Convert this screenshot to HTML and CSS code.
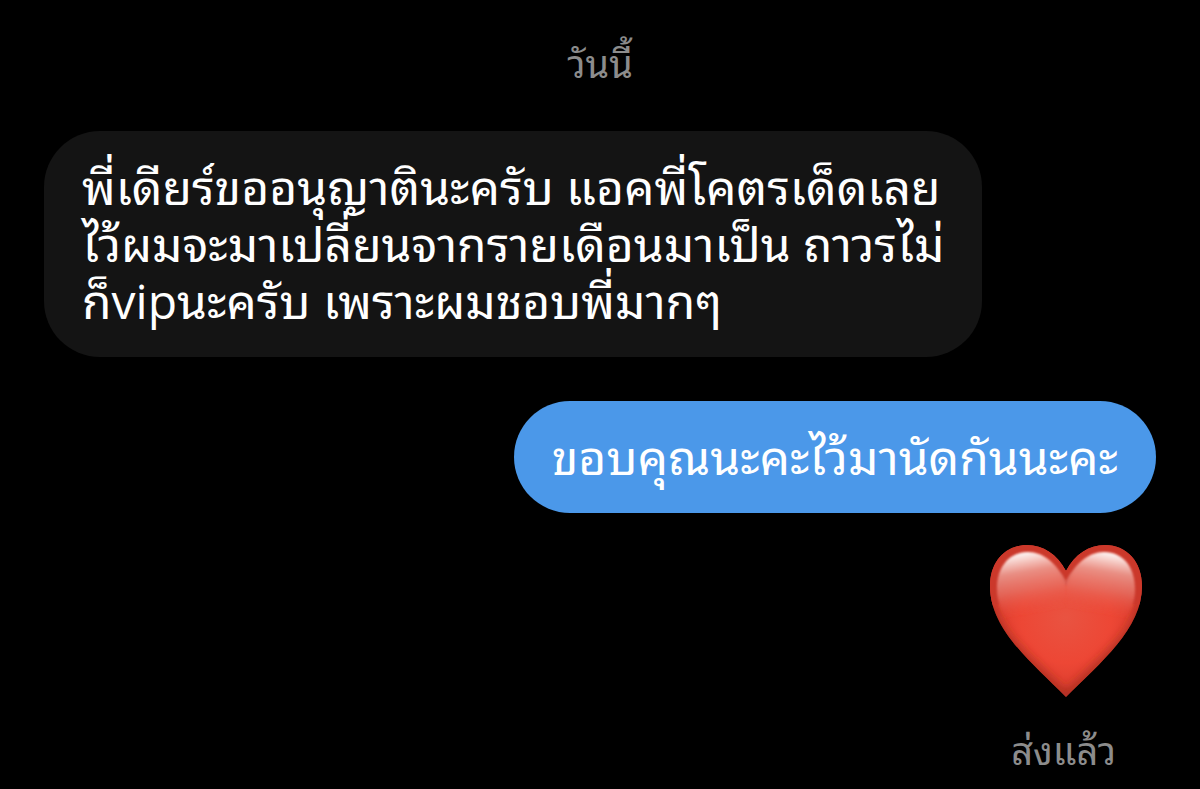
FILE: index.html
```html
<!DOCTYPE html>
<html lang="th">
<head>
<meta charset="utf-8">
<meta name="viewport" content="width=device-width, initial-scale=1">
<title>แชท</title>
<link rel="stylesheet" href="styles.css">
</head>
<body>
<main class="chat">
  <time class="day">วันนี้</time>
  <p class="bubble bubble-in">พี่เดียร์ขออนุญาตินะครับ แอคพี่โคตรเด็ดเลย<br>ไว้ผมจะมาเปลี่ยนจากรายเดือนมาเป็น ถาวรไม่<br>ก็vipนะครับ เพราะผมชอบพี่มากๆ</p>
  <p class="bubble bubble-out">ขอบคุณนะคะไว้มานัดกันนะคะ</p>
  <svg class="heart" viewBox="0 0 154 154" role="img" aria-label="หัวใจ">
    <defs>
      <radialGradient id="body" gradientUnits="userSpaceOnUse" cx="77" cy="74" r="90">
        <stop offset="0" stop-color="#e95341"/>
        <stop offset="0.5" stop-color="#ed4735"/>
        <stop offset="0.75" stop-color="#e04030"/>
        <stop offset="1" stop-color="#c73529"/>
      </radialGradient>
      <linearGradient id="shine" gradientUnits="userSpaceOnUse" x1="35" y1="7" x2="46" y2="70">
        <stop offset="0" stop-color="#fff" stop-opacity="1"/>
        <stop offset="0.12" stop-color="#fbe6e2" stop-opacity="0.9"/>
        <stop offset="0.32" stop-color="#eb9d93" stop-opacity="0.85"/>
        <stop offset="0.6" stop-color="#e67b6f" stop-opacity="0.65"/>
        <stop offset="1" stop-color="#ea5140" stop-opacity="0"/>
      </linearGradient>
      <filter id="soft" x="-10%" y="-10%" width="120%" height="120%">
        <feGaussianBlur stdDeviation="1"/>
      </filter>
      <filter id="shade" x="-20%" y="-20%" width="140%" height="140%">
        <feGaussianBlur stdDeviation="5"/>
      </filter>
      <clipPath id="outline">
        <path d="M77 27C68 10 54 1 38 1C16 1 1 18 1 42C1 85 42 118 77 153C112 118 153 85 153 42C153 18 138 1 116 1C100 1 86 10 77 27Z"/>
      </clipPath>
      <path id="lobe" d="M77 37C67 19 54 8 39 8C20 8 8 23 8 45C8 58 12 66 16 76L77 76Z"/>
    </defs>
    <g clip-path="url(#outline)">
      <path fill="url(#body)" d="M0 0H154V154H0Z"/>
      <path fill="none" stroke="#9c281e" stroke-opacity="0.75" stroke-width="9" filter="url(#shade)" d="M1 60C10 97 46 122 77 153C108 122 144 97 153 60"/>
      <path fill="none" stroke="#cb372b" stroke-width="14" filter="url(#soft)" d="M4 62C-2 44 1 1 38 1C54 1 68 10 77 27C86 10 100 1 116 1C153 1 156 44 150 62"/>
      <use href="#lobe" fill="url(#shine)" filter="url(#soft)"/>
      <use href="#lobe" fill="url(#shine)" filter="url(#soft)" transform="translate(154 0) scale(-1 1)"/>
    </g>
  </svg>
  <p class="status">ส่งแล้ว</p>
</main>
</body>
</html>
```
FILE: styles.css
```css
* { box-sizing: border-box; }
body {
  margin: 0;
  background: #000;
  color: #fff;
  font-family: "Open Sans", "Noto Sans Thai Looped", "Noto Looped Thai", Sarabun, Loma, sans-serif;
}
.chat {
  display: flex;
  flex-direction: column;
  align-items: flex-start;
  padding: 33px 44px 0;
}
.day {
  align-self: center;
  color: #8c8c8c;
  font-size: 38px;
  line-height: 60px;
}
.bubble {
  margin: 0;
  padding: 27px 38px 28px;
  border-radius: 56px;
  font-size: 48px;
  line-height: 57px;
}
.bubble-in {
  margin-top: 38px;
  background: #141414;
}
.bubble-out {
  align-self: flex-end;
  margin-top: 44px;
  background: #4b98e9;
}
.heart {
  align-self: flex-end;
  width: 154px;
  height: 154px;
  margin: 31px 13px 0 0;
}
.status {
  align-self: flex-end;
  margin: 22px 40px 0 0;
  color: #8c8c8c;
  font-size: 38px;
  line-height: 60px;
}
```
